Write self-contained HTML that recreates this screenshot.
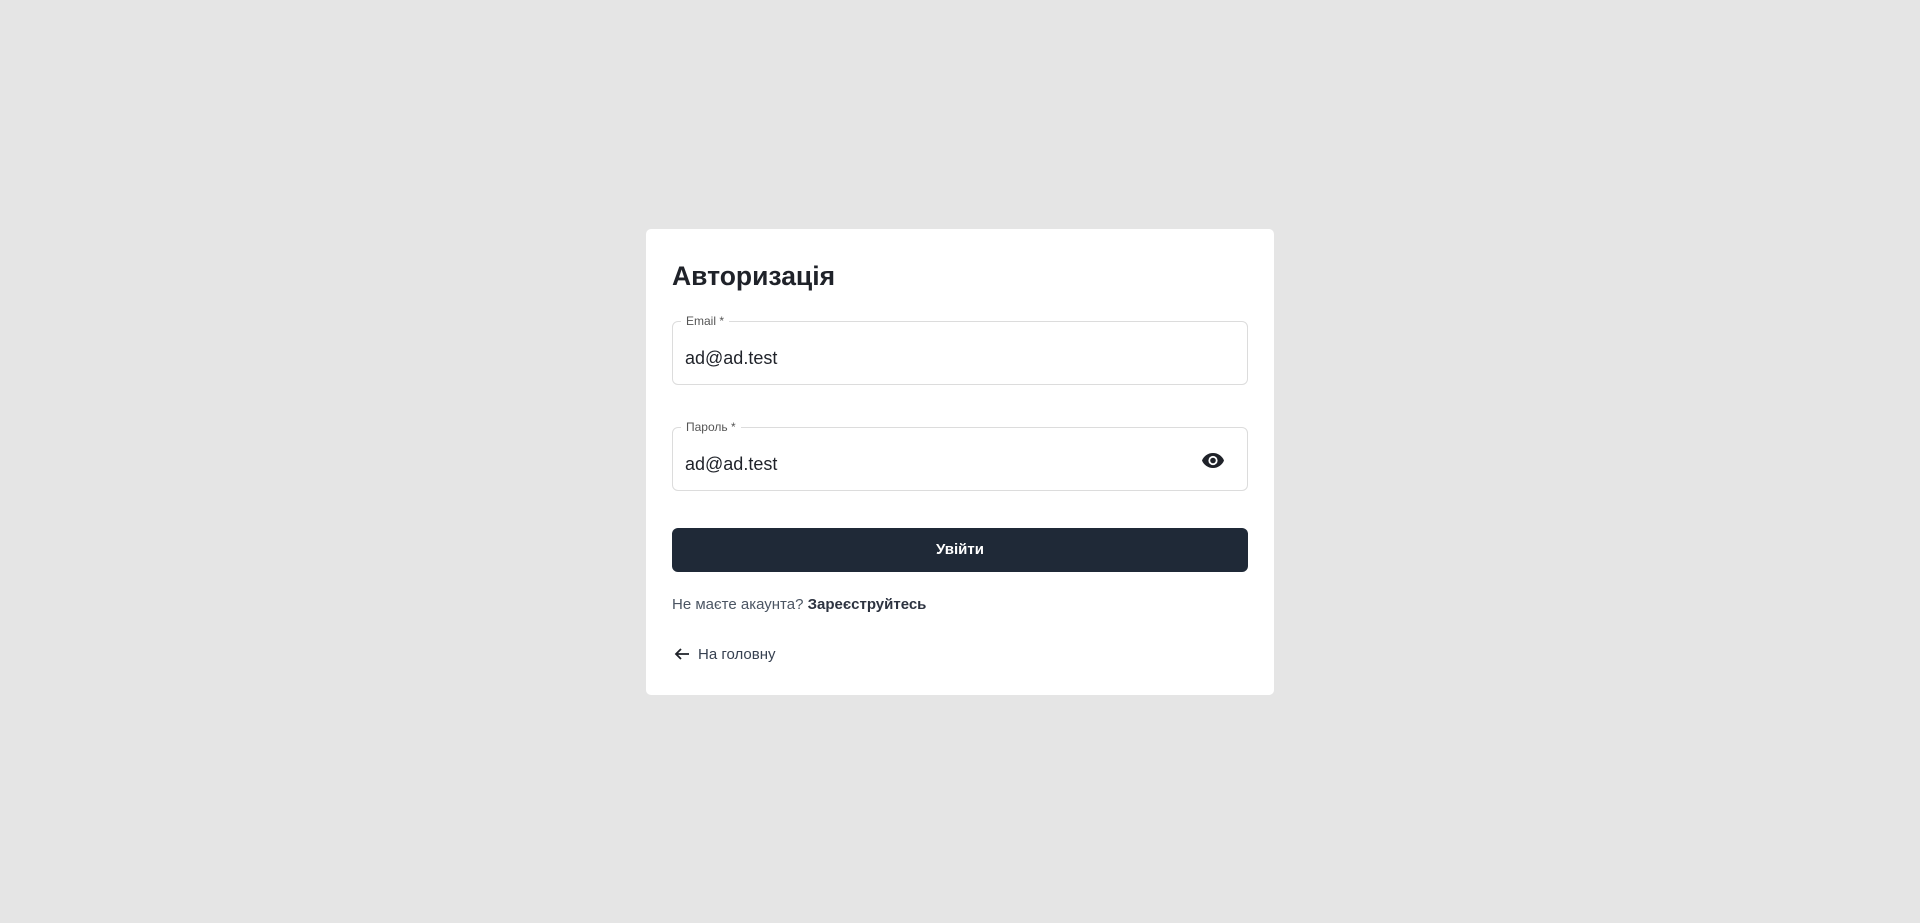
<!DOCTYPE html>
<html><head><meta charset="utf-8"><style>
*{box-sizing:border-box;margin:0;padding:0}
body{width:1920px;height:923px;background:#e5e5e5;font-family:"Liberation Sans",Arial,sans-serif;position:relative;overflow:hidden}
.card{position:absolute;left:646px;top:229px;width:628px;height:466px;background:#fff;border-radius:5px}
.t{position:absolute;left:26px;top:31px;font-size:26.5px;font-weight:bold;color:#1f2229;line-height:32px}
.f{position:absolute;left:26px;width:576px;height:64px;border:1px solid #dcdcdc;border-radius:6px}
.f .l{position:absolute;left:8px;top:-8px;background:#fff;padding:0 5px;font-size:12px;color:#555;line-height:14px}
.f .v{position:absolute;left:12px;top:25px;font-size:18px;color:#1f2229;line-height:22px}
.btn{position:absolute;left:26px;top:299px;width:576px;height:44px;background:#1f2937;border-radius:6px;color:#fff;font-weight:bold;font-size:15px;text-align:center;line-height:44px}
.q{position:absolute;left:26px;top:366px;font-size:15px;color:#4b5563;line-height:20px}
.q b{color:#2d3340}
.h{position:absolute;left:26px;top:416px;font-size:15px;color:#374151;line-height:20px}
</style></head><body>
<div class="card">
<div class="t">Авторизація</div>
<div class="f" style="top:92px"><span class="l">Email *</span><span class="v">ad@ad.test</span></div>
<div class="f" style="top:198px"><span class="l">Пароль *</span><span class="v">ad@ad.test</span>
<svg style="position:absolute;left:528px;top:22px" width="24" height="20" viewBox="0 0 24 20"><path d="M12 3C7 3 2.7 6.1 1 10.5 2.7 14.9 7 18 12 18s9.3-3.1 11-7.5C21.3 6.1 17 3 12 3z" fill="#1f2229"/><circle cx="12" cy="10.5" r="4.6" fill="#fff"/><circle cx="12" cy="10.5" r="2.8" fill="#1f2229"/></svg>
</div>
<div class="btn">Увійти</div>
<div class="q">Не маєте акаунта? <b>Зареєструйтесь</b></div>
<div class="h"><svg width="18" height="14" viewBox="0 0 18 14" style="vertical-align:-2px;margin-right:7px;margin-left:1px"><path d="M16 7H3M8 2L3 7l5 5" stroke="#1f2229" stroke-width="1.8" fill="none"/></svg>На головну</div>
</div>
</body></html>
